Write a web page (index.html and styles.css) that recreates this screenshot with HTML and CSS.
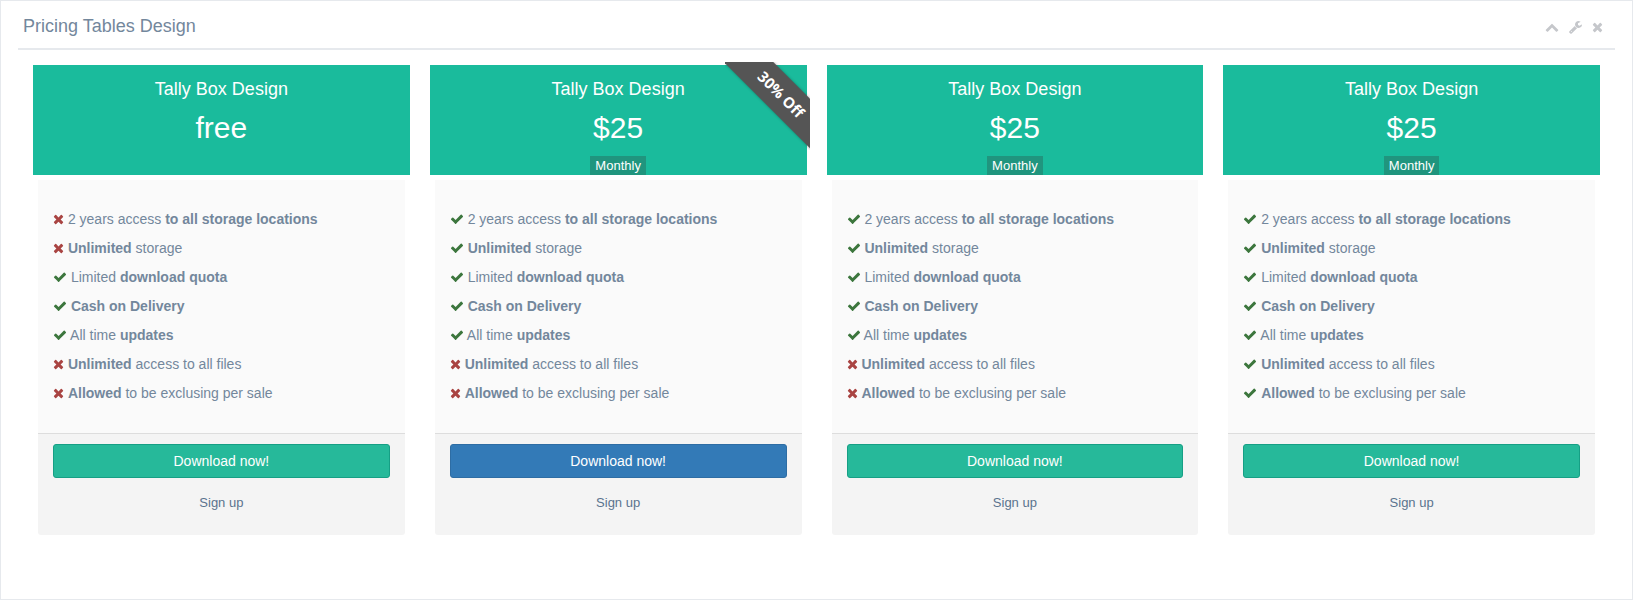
FILE: index.html
```html
<!DOCTYPE html>
<html lang="en">
<head>
<meta charset="utf-8">
<title>Pricing Tables Design</title>
<link rel="stylesheet" href="styles.css">
</head>
<body>
<svg class="sprite" aria-hidden="true">
  <symbol id="check" viewBox="0 0 1792 1792"><path d="M1671 566q0 40-28 68l-724 724-136 136q-28 28-68 28t-68-28l-136-136-362-362q-28-28-28-68t28-68l136-136q28-28 68-28t68 28l294 295 656-657q28-28 68-28t68 28l136 136q28 28 28 68z"/></symbol>
  <symbol id="times" viewBox="192 0 1408 1792"><path d="M1490 1322q0 40-28 68l-136 136q-28 28-68 28t-68-28l-294-294-294 294q-28 28-68 28t-68-28l-136-136q-28-28-28-68t28-68l294-294-294-294q-28-28-28-68t28-68l136-136q28-28 68-28t68 28l294 294 294-294q28-28 68-28t68 28l136 136q28 28 28 68t-28 68l-294 294 294 294q28 28 28 68z"/></symbol>
  <symbol id="chevron-up" viewBox="0 0 1792 1792"><path d="M1683 1331l-166 165q-19 19-45 19t-45-19l-531-531-531 531q-19 19-45 19t-45-19l-166-165q-19-19-19-45.500t19-45.500l742-741q19-19 45-19t45 19l742 741q19 19 19 45.500t-19 45.500z"/></symbol>
  <symbol id="wrench" viewBox="64 0 1664 1792"><path d="M448 1472q0-26-19-45t-45-19-45 19-19 45 19 45 45 19 45-19 19-45zm644-420l-682 682q-37 37-90 37-52 0-91-37l-106-108q-38-36-38-90 0-53 38-91l681-681q39 98 114.500 173.500t173.500 114.500zm634-435q0 39-23 106-47 134-164.500 217.500t-258.500 83.500q-185 0-316.500-131.500t-131.500-316.500 131.500-316.500 316.500-131.500q58 0 121.500 16.500t107.500 46.500q16 11 16 28t-16 28l-293 169v224l193 107q5-3 79-48.500t135.500-81 70.500-35.500q15 0 23.500 10t8.500 25z"/></symbol>
</svg>
<main class="panel">
  <header class="panel-title">
    <h2>Pricing Tables Design</h2>
    <div class="toolbox">
      <button type="button" aria-label="Collapse"><svg class="icon"><use href="#chevron-up"/></svg></button>
      <button type="button" aria-label="Settings"><svg class="icon wrench"><use href="#wrench"/></svg></button>
      <button type="button" aria-label="Close"><svg class="icon times"><use href="#times"/></svg></button>
    </div>
  </header>
  <div class="plans">
    <section class="pricing">
      <div class="title"><h3>Tally Box Design</h3><p class="price">free</p></div>
      <div class="content">
        <ul class="features">
          <li><svg class="icon times danger"><use href="#times"/></svg> 2 years access <strong>to all storage locations</strong></li>
          <li><svg class="icon times danger"><use href="#times"/></svg> <strong>Unlimited</strong> storage</li>
          <li><svg class="icon success"><use href="#check"/></svg> Limited <strong>download quota</strong></li>
          <li><svg class="icon success"><use href="#check"/></svg> <strong>Cash on Delivery</strong></li>
          <li><svg class="icon success"><use href="#check"/></svg> All time <strong>updates</strong></li>
          <li><svg class="icon times danger"><use href="#times"/></svg> <strong>Unlimited</strong> access to all files</li>
          <li><svg class="icon times danger"><use href="#times"/></svg> <strong>Allowed</strong> to be exclusing per sale</li>
        </ul>
        <div class="footer"><button type="button" class="btn">Download <span>now!</span></button><a href="#signup">Sign up</a></div>
      </div>
    </section>
    <section class="pricing">
      <div class="ribbon-clip"><div class="ribbon">30% Off</div></div>
      <div class="title"><h3>Tally Box Design</h3><p class="price">$25</p><span class="period">Monthly</span></div>
      <div class="content">
        <ul class="features">
          <li><svg class="icon success"><use href="#check"/></svg> 2 years access <strong>to all storage locations</strong></li>
          <li><svg class="icon success"><use href="#check"/></svg> <strong>Unlimited</strong> storage</li>
          <li><svg class="icon success"><use href="#check"/></svg> Limited <strong>download quota</strong></li>
          <li><svg class="icon success"><use href="#check"/></svg> <strong>Cash on Delivery</strong></li>
          <li><svg class="icon success"><use href="#check"/></svg> All time <strong>updates</strong></li>
          <li><svg class="icon times danger"><use href="#times"/></svg> <strong>Unlimited</strong> access to all files</li>
          <li><svg class="icon times danger"><use href="#times"/></svg> <strong>Allowed</strong> to be exclusing per sale</li>
        </ul>
        <div class="footer"><button type="button" class="btn btn-primary">Download <span>now!</span></button><a href="#signup">Sign up</a></div>
      </div>
    </section>
    <section class="pricing">
      <div class="title"><h3>Tally Box Design</h3><p class="price">$25</p><span class="period">Monthly</span></div>
      <div class="content">
        <ul class="features">
          <li><svg class="icon success"><use href="#check"/></svg> 2 years access <strong>to all storage locations</strong></li>
          <li><svg class="icon success"><use href="#check"/></svg> <strong>Unlimited</strong> storage</li>
          <li><svg class="icon success"><use href="#check"/></svg> Limited <strong>download quota</strong></li>
          <li><svg class="icon success"><use href="#check"/></svg> <strong>Cash on Delivery</strong></li>
          <li><svg class="icon success"><use href="#check"/></svg> All time <strong>updates</strong></li>
          <li><svg class="icon times danger"><use href="#times"/></svg> <strong>Unlimited</strong> access to all files</li>
          <li><svg class="icon times danger"><use href="#times"/></svg> <strong>Allowed</strong> to be exclusing per sale</li>
        </ul>
        <div class="footer"><button type="button" class="btn">Download <span>now!</span></button><a href="#signup">Sign up</a></div>
      </div>
    </section>
    <section class="pricing">
      <div class="title"><h3>Tally Box Design</h3><p class="price">$25</p><span class="period">Monthly</span></div>
      <div class="content">
        <ul class="features">
          <li><svg class="icon success"><use href="#check"/></svg> 2 years access <strong>to all storage locations</strong></li>
          <li><svg class="icon success"><use href="#check"/></svg> <strong>Unlimited</strong> storage</li>
          <li><svg class="icon success"><use href="#check"/></svg> Limited <strong>download quota</strong></li>
          <li><svg class="icon success"><use href="#check"/></svg> <strong>Cash on Delivery</strong></li>
          <li><svg class="icon success"><use href="#check"/></svg> All time <strong>updates</strong></li>
          <li><svg class="icon success"><use href="#check"/></svg> <strong>Unlimited</strong> access to all files</li>
          <li><svg class="icon success"><use href="#check"/></svg> <strong>Allowed</strong> to be exclusing per sale</li>
        </ul>
        <div class="footer"><button type="button" class="btn">Download <span>now!</span></button><a href="#signup">Sign up</a></div>
      </div>
    </section>
  </div>
</main>
</body>
</html>
```
FILE: styles.css
```css
* { box-sizing: border-box; }
body {
  margin: 0;
  font-family: "Liberation Sans", Arial, sans-serif;
  font-size: 13px;
  color: #73879c;
  background: #fff;
}
h2, h3, p, ul { margin: 0; padding: 0; font-weight: 400; }
.sprite { position: absolute; width: 0; height: 0; }
.icon { width: 14px; height: 14px; fill: currentColor; vertical-align: -2px; }
.icon.times { width: 11px; }
.icon.wrench { width: 13px; }
.success { color: #3c763d; }
.danger { color: #a94442; }

.panel {
  min-height: 100vh;
  padding: 10px 17px;
  border: 1px solid #e6e9ed;
}
.panel-title {
  display: flex;
  justify-content: space-between;
  align-items: center;
  height: 39px;
  padding: 0 12px 7px 5px;
  border-bottom: 2px solid #e6e9ed;
}
.panel-title h2 { font-size: 18px; line-height: 20px; }
.toolbox { display: flex; gap: 10px; padding-top: 2px; }
.toolbox button {
  display: flex;
  padding: 0;
  border: 0;
  background: none;
  color: #c5c7cb;
}

.plans {
  display: grid;
  grid-template-columns: repeat(4, 1fr);
  gap: 20px;
  padding: 15px 15px 0;
}
.pricing { position: relative; }
.title {
  display: flex;
  flex-direction: column;
  align-items: center;
  height: 110px;
  padding-top: 14px;
  background: #1abb9c;
  color: #fff;
}
.title h3 { font-size: 18px; line-height: 20px; }
.price { margin-top: 12px; font-size: 30px; line-height: 34px; }
.period {
  margin-top: auto;
  padding: 2px 5px;
  font-size: 13px;
  line-height: 15px;
  background: rgba(51, 51, 51, .28);
}

.content { margin: 5px 5px 0; border-radius: 0 0 3px 3px; overflow: hidden; }
.features {
  padding: 25px 15px 25px;
  background: #fafafa;
  list-style: none;
  font-size: 14px;
  line-height: 29px;
}
.footer {
  display: flex;
  flex-direction: column;
  align-items: center;
  gap: 17px;
  padding: 10px 15px 24px;
  border-top: 1px solid #ddd;
  background: #f4f4f4;
}
.footer a { line-height: 16px; color: #5a738e; text-decoration: none; }
.btn {
  width: 100%;
  height: 34px;
  border: 1px solid #169f85;
  border-radius: 3px;
  background: #26b99a;
  color: #fff;
  font: 14px "Liberation Sans", Arial, sans-serif;
}
.btn-primary { background: #337ab7; border-color: #2e6da4; }

.ribbon-clip {
  position: absolute;
  top: -3px;
  right: -3px;
  width: 85px;
  height: 88px;
  overflow: hidden;
}
.ribbon {
  position: absolute;
  top: 15px;
  left: -14px;
  width: 140px;
  padding: 7px 0 8px;
  background: #555;
  box-shadow: 0 0 3px rgba(0, 0, 0, .3);
  color: #fff;
  font: bold 15px/20px "Open Sans", sans-serif;
  text-align: center;
  transform: rotate(45deg);
}
```
